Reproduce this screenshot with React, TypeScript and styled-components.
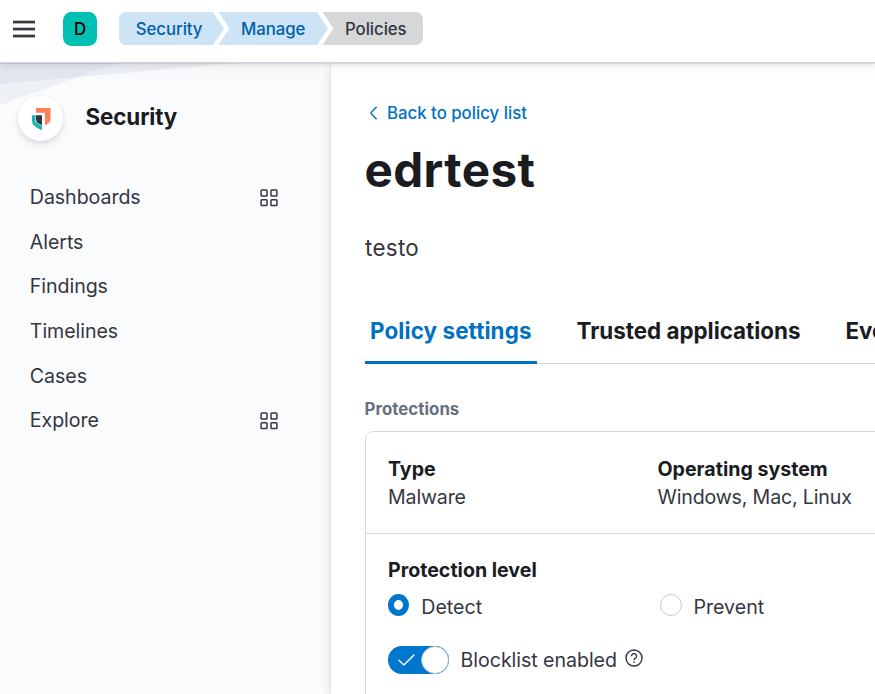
import React from 'react';
import styled, { createGlobalStyle } from 'styled-components';

const Global = createGlobalStyle`
  *, *::before, *::after { box-sizing: border-box; }
  html, body { margin: 0; height: 100%; overflow: hidden; background: #fff; }
  body { font-family: Inter, "Liberation Sans", sans-serif; font-size: 19.6px; color: #343741; }
  h1, h2, h3, p, ul { margin: 0; padding: 0; font-weight: inherit; font-size: inherit; }
  button { font: inherit; border: 0; padding: 0; background: none; }
  svg { display: block; flex: none; }
`;

const Page = styled.div`
  width: 875px;
  height: 694px;
  display: flex;
  flex-direction: column;
  overflow: hidden;
`;

const TopBar = styled.header`
  position: relative;
  z-index: 2;
  flex: none;
  height: 63px;
  display: flex;
  align-items: flex-start;
  padding: 12px 0 0 13px;
  background: #fff;
  border-bottom: 1px solid #cdd3e0;
  box-shadow: 0 1px 1px rgba(0, 0, 0, 0.09), 0 2.5px 6px rgba(0, 0, 0, 0.07), 0 8px 16px rgba(0, 0, 0, 0.025);
`;

const MenuButton = styled.button`
  margin-top: 8px;
  width: 22px;
  height: 18px;
`;

const SpaceBadge = styled.div`
  margin-left: 28px;
  width: 34px;
  height: 34px;
  border-radius: 8.4px;
  background: #00bfb3;
  color: #000;
  font-size: 16.8px;
  line-height: 34px;
  font-weight: 500;
  text-align: center;
`;

const Breadcrumbs = styled.nav`
  display: flex;
  margin-left: 22px;
  font-size: 16.8px;
  line-height: 34px;
  font-weight: 500;
`;

const crumbShapes = {
  first: 'polygon(0 0, calc(100% - 11px) 0, 100% 50%, calc(100% - 11px) 100%, 0 100%)',
  middle: 'polygon(0 0, calc(100% - 11px) 0, 100% 50%, calc(100% - 11px) 100%, 0 100%, 11px 50%)',
  last: 'polygon(0 0, 100% 0, 100% 100%, 0 100%, 11px 50%)',
};

const Crumb = styled.span<{ $shape: keyof typeof crumbShapes; $width: number }>`
  width: ${(p) => p.$width}px;
  height: 33px;
  padding-left: ${(p) => (p.$shape === 'first' ? 16.8 : 22.5)}px;
  clip-path: ${(p) => crumbShapes[p.$shape]};
  border-radius: ${(p) => (p.$shape === 'first' ? '7px 0 0 7px' : p.$shape === 'last' ? '0 7px 7px 0' : '0')};
  background: ${(p) => (p.$shape === 'last' ? '#d6d7d9' : '#cce4f5')};
  color: ${(p) => (p.$shape === 'last' ? '#343741' : '#0061a6')};
  letter-spacing: -0.06px;
  & + & { margin-left: -5.5px; }
`;

const Body = styled.div`
  flex: 1;
  min-height: 0;
  display: flex;
`;

const Sidebar = styled.aside`
  position: relative;
  flex: none;
  width: 331px;
  padding: 33px 0 0 18px;
  background: #fafbfd;
`;

const Backdrop = styled.svg`
  position: absolute;
  top: 0;
  left: 0;
`;

const SolutionHeader = styled.div`
  position: relative;
  display: flex;
  align-items: center;
  height: 45px;
`;

const SolutionLogo = styled.div`
  width: 45px;
  height: 45px;
  border-radius: 50%;
  background: #fff;
  display: grid;
  place-items: center;
  box-shadow: 0 1px 5px rgba(0, 0, 0, 0.08), 0 4px 5px rgba(0, 0, 0, 0.04), 0 7px 12px rgba(0, 0, 0, 0.04);
`;

const SolutionName = styled.h2`
  && { font-size: 22.4px; font-weight: 700; }
  margin-left: 22.5px;
  margin-top: -4px;
  letter-spacing: -0.12px;
  color: #1a1c21;
`;

const NavList = styled.ul`
  margin-top: 33.8px;
  list-style: none;
`;

const NavItem = styled.li`
  display: flex;
  align-items: center;
  justify-content: space-between;
  height: 44.66px;
  padding: 0 52.7px 0 11.8px;
  letter-spacing: -0.06px;
  svg { margin-top: 1.6px; }
`;

const Main = styled.main`
  position: relative;
  flex: 1;
  min-width: 0;
  padding: 38px 0 0 34px;
  background: #fff;
  box-shadow: 0 0 2px rgba(0, 0, 0, 0.12), 0 3px 11px rgba(0, 0, 0, 0.09), 0 8px 16px rgba(0, 0, 0, 0.03);
`;

const BackLink = styled.a`
  display: flex;
  align-items: center;
  gap: 9px;
  height: 24px;
  padding-left: 4px;
  color: #0071c2;
  font-size: 16.8px;
  font-weight: 500;
`;

const Title = styled.h1`
  && { font-size: 47.6px; font-weight: 700; }
  margin: 17px 0 0 -0.6px;
  line-height: 56px;
  letter-spacing: 0.42px;
  color: #1a1c21;
`;

const Description = styled.p`
  margin-top: 35px;
  font-size: 22.4px;
  line-height: 30px;
  letter-spacing: 0.3px;
`;

const Tabs = styled.div`
  display: flex;
  gap: 35px;
  height: 64px;
  margin-top: 37px;
  overflow: hidden;
  box-shadow: inset 0 -1px 0 #d3dae6;
`;

const Tab = styled.div<{ $selected?: boolean }>`
  flex: none;
  padding: 0 5px;
  line-height: 62px;
  font-size: 22.4px;
  font-weight: 700;
  letter-spacing: ${(p) => (p.$selected ? '0.11px' : '-0.02px')};
  white-space: nowrap;
  color: ${(p) => (p.$selected ? '#0071c2' : '#1a1c21')};
  box-shadow: ${(p) => (p.$selected ? 'inset 0 -3px 0 #0071c2' : 'none')};
`;

const SectionLabel = styled.h3`
  && { font-size: 16.8px; font-weight: 700; }
  margin: 34px 0 0 -0.5px;
  line-height: 22px;
  letter-spacing: 0.05px;
  color: #69707d;
`;

const Card = styled.section`
  margin-top: 11px;
  width: 700px;
  height: 400px;
  border: 1px solid #d3dae6;
  border-radius: 8.4px;
`;

const Summary = styled.div`
  display: grid;
  grid-template-columns: 269.5px 1fr;
  height: 102px;
  padding: 23px 22px 0;
  border-bottom: 1px solid #d3dae6;
`;

const Field = styled.div`
  line-height: 28px;
  white-space: nowrap;
  letter-spacing: -0.16px;
`;

const Strong = styled.div`
  font-weight: 700;
  line-height: 28px;
  letter-spacing: 0;
  color: #1a1c21;
`;

const Level = styled.div`
  padding: 22px 22px 0;
`;

const RadioRow = styled.div`
  display: grid;
  grid-template-columns: 271.5px 1fr;
  height: 28px;
  margin-top: 9px;
`;

const RadioOption = styled.label`
  display: flex;
  align-items: center;
  gap: 12px;
  line-height: 28px;
`;

const RadioDot = styled.span<{ $checked?: boolean }>`
  width: ${(p) => (p.$checked ? 21.3 : 22)}px;
  height: 22px;
  margin-top: -4px;
  border-radius: 50%;
  border: ${(p) => (p.$checked ? '6.5px solid #0077cc' : '1px solid #c9cacd')};
  background: #fff;
`;

const SwitchRow = styled.div`
  display: flex;
  align-items: center;
  height: 28px;
  margin-top: 25px;
`;

const SwitchTrack = styled.span`
  display: flex;
  align-items: center;
  justify-content: space-between;
  width: 61px;
  height: 28px;
  padding-left: 10px;
  border-radius: 14px;
  background: #0077cc;
`;

const SwitchThumb = styled.span`
  width: 28px;
  height: 28px;
  border-radius: 50%;
  border: 1px solid #a9b9c9;
  background: #fff;
`;

const SwitchLabel = styled.span`
  margin: 0 8px 0 11.6px;
  letter-spacing: -0.05px;
`;

const HelpIcon = styled.svg`
  margin-top: -4px;
`;

const AppsIcon = () => (
  <svg width="18" height="18" viewBox="0 0 18 18" fill="none" stroke="#343741" strokeWidth="1.5">
    <rect x="1.1" y="1.1" width="5.9" height="5.9" rx="0.8" />
    <rect x="11" y="1.1" width="5.9" height="5.9" rx="0.8" />
    <rect x="1.1" y="10.7" width="5.9" height="5.9" rx="0.8" />
    <rect x="11" y="10.7" width="5.9" height="5.9" rx="0.8" />
  </svg>
);

const SecurityLogo = () => (
  <svg width="20" height="23" viewBox="0 0 20 23">
    <path d="M5 1h14.5v11.5c0 2.500-1.900 4.300-5.500 5.700V5.800H5z" fill="#ff7e55" />
    <path d="M1 8.200h3.500v6c0 3 2.100 5.300 6.500 6.800v2C4.800 20.800 1 18 1 13.800z" fill="#1db6ac" />
    <path d="M5 8.200h6v10C7 16.600 5 14.900 5 12.500z" fill="#343741" />
    <path d="M5 13c0 2.500 2 4.200 6 5.700v4.300C7.500 21.500 5 19 5 16z" fill="#1db6ac" />
  </svg>
);

const navItems = [
  { label: 'Dashboards', hasApps: true },
  { label: 'Alerts' },
  { label: 'Findings' },
  { label: 'Timelines' },
  { label: 'Cases' },
  { label: 'Explore', hasApps: true },
];

export default function App() {
  return (
    <Page>
      <Global />
      <TopBar>
        <MenuButton aria-label="Toggle navigation">
          <svg width="22" height="18" viewBox="0 0 22 18" fill="#343741">
            <rect y="0.7" width="22" height="2.7" />
            <rect y="7.7" width="22" height="2.7" />
            <rect y="14.7" width="22" height="2.7" />
          </svg>
        </MenuButton>
        <SpaceBadge>D</SpaceBadge>
        <Breadcrumbs>
          <Crumb $shape="first" $width={105}>Security</Crumb>
          <Crumb $shape="middle" $width={109.5}>Manage</Crumb>
          <Crumb $shape="last" $width={100.5}>Policies</Crumb>
        </Breadcrumbs>
      </TopBar>
      <Body>
        <Sidebar>
          <Backdrop width="331" height="60" viewBox="0 0 331 60">
            <path d="M0 0H117L0 42z" fill="#d3dae6" fillOpacity="0.33" />
            <path d="M0 0H235L0 21z" fill="#c5cddc" fillOpacity="0.27" />
          </Backdrop>
          <SolutionHeader>
            <SolutionLogo><SecurityLogo /></SolutionLogo>
            <SolutionName>Security</SolutionName>
          </SolutionHeader>
          <NavList>
            {navItems.map((item) => (
              <NavItem key={item.label}>
                {item.label}
                {item.hasApps && <AppsIcon />}
              </NavItem>
            ))}
          </NavList>
        </Sidebar>
        <Main>
          <BackLink>
            <svg width="9" height="14" viewBox="0 0 9 14" fill="none" stroke="#0071c2" strokeWidth="1.5" strokeLinecap="round" strokeLinejoin="round">
              <path d="M7.2 1.2L2.3 6.3Q1.6 7 2.3 7.7L7.2 12.8" />
            </svg>
            Back to policy list
          </BackLink>
          <Title>edrtest</Title>
          <Description>testo</Description>
          <Tabs>
            <Tab $selected>Policy settings</Tab>
            <Tab>Trusted applications</Tab>
            <Tab>Event filters</Tab>
          </Tabs>
          <SectionLabel>Protections</SectionLabel>
          <Card>
            <Summary>
              <Field><Strong>Type</Strong>Malware</Field>
              <Field><Strong>Operating system</Strong>Windows, Mac, Linux</Field>
            </Summary>
            <Level>
              <Strong>Protection level</Strong>
              <RadioRow>
                <RadioOption><RadioDot $checked />Detect</RadioOption>
                <RadioOption><RadioDot />Prevent</RadioOption>
              </RadioRow>
              <SwitchRow>
                <SwitchTrack>
                  <svg width="17" height="12" viewBox="0 0 17 12" fill="none" stroke="#fff" strokeWidth="1.4" strokeLinecap="round" strokeLinejoin="round">
                    <path d="M1 6.3L5.9 11L16 1" />
                  </svg>
                  <SwitchThumb />
                </SwitchTrack>
                <SwitchLabel>Blocklist enabled</SwitchLabel>
                <HelpIcon width="18" height="18" viewBox="0 0 18 18" fill="none" stroke="#343741" strokeWidth="1.4">
                  <circle cx="9" cy="9" r="8" />
                  <path d="M6.5 7.2a2.5 2.5 0 1 1 4 1.9c-.9.6-1.5 1-1.5 2" />
                  <circle cx="9" cy="13" r="0.5" fill="#343741" strokeWidth="0.8" />
                </HelpIcon>
              </SwitchRow>
            </Level>
          </Card>
        </Main>
      </Body>
    </Page>
  );
}
